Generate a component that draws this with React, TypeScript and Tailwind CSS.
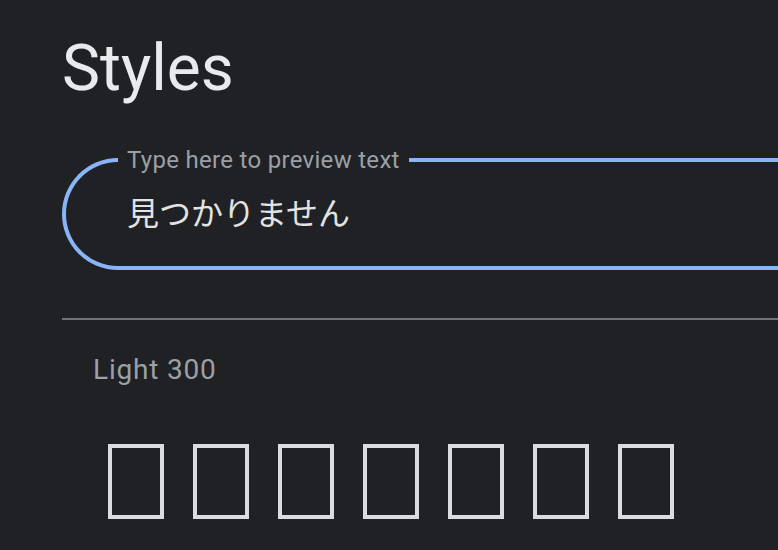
const preview = "見つかりません"

export default function App() {
  return (
    <main className="h-[550px] w-[778px] overflow-hidden bg-[#202124] pl-[62px] font-['Roboto',sans-serif]">
      <h1 className="mt-[37px] text-[64px] leading-none text-[#e8eaed]">Styles</h1>

      <div className="relative mt-[57px] flex h-[112px] items-center rounded-l-full border-4 border-r-0 border-[#8ab4f8] pb-[6px] pl-[61px]">
        <span className="absolute left-[52px] top-[-2px] -translate-y-1/2 bg-[#202124] px-[9px] text-[24px] leading-none tracking-[0.3px] text-[#9aa0a6]">
          Type here to preview text
        </span>
        <span className="font-['Noto_Sans_CJK_JP',sans-serif] text-[32px] leading-none text-[#e3e3e3]">
          {preview}
        </span>
      </div>

      <div className="mt-[48px] h-[2px] bg-[#6f7276]" />

      <div className="mt-[36px] pl-[31px] text-[28px] leading-none tracking-[0.8px] text-[#9aa0a6]">Light 300</div>

      <div className="ml-[46px] mt-[60px] flex gap-[29px]" title={preview}>
        {preview.split("").map((ch, i) => (
          <span key={i} className="h-[75px] w-[56px] border-4 border-[#dadce0]" />
        ))}
      </div>
    </main>
  )
}
